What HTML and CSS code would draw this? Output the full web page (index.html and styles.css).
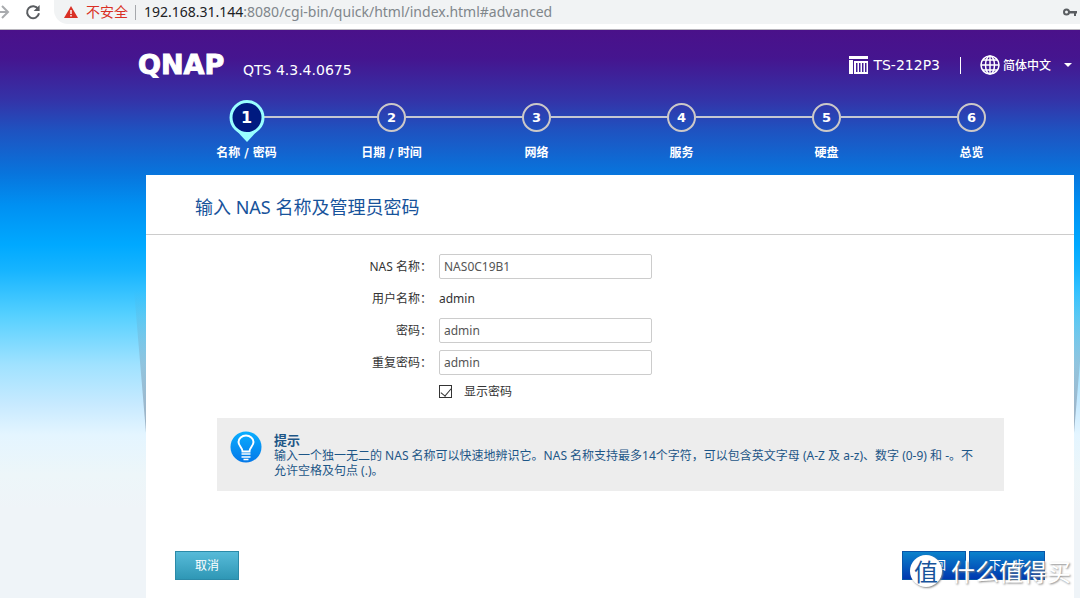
FILE: index.html
```html
<!DOCTYPE html>
<html lang="zh-CN">
<head>
<meta charset="utf-8">
<title>QNAP</title>
<meta name="viewport" content="width=device-width, initial-scale=1">
<link rel="stylesheet" href="styles.css">
</head>
<body>
<div class="browser-bar">
  <svg class="forward" width="10" height="16" viewBox="0 0 10 16" fill="none" stroke="#a9abae" stroke-width="2"><path d="M0 8h8M2 2l6 6-6 6"/></svg>
  <button class="reload" type="button" aria-label="Reload"><svg width="16" height="16" viewBox="0 0 16 16"><path d="M13.2 5A6 6 0 1 0 14 9.3" fill="none" stroke="#5a5d61" stroke-width="2"/><path d="M14.6 1v6H8.6z" fill="#5a5d61"/></svg></button>
  <div class="address">
    <svg width="14" height="12" viewBox="0 0 14 12"><path d="M7 0l7 12H0z" fill="#d93025"/><path d="M6.3 4h1.4v4H6.3zM6.3 9h1.4v1.4H6.3z" fill="#fff"/></svg>
    <span class="insecure">不安全</span>
    <span class="bar-rule"></span>
    <span class="url"><b>192.168.31.144</b>:8080/cgi-bin/quick/html/index.html#advanced</span>
    <svg class="key" width="14" height="10" viewBox="0 0 14 10"><circle cx="3.5" cy="5" r="2.5" fill="none" stroke="#5a5d61" stroke-width="2"/><path d="M6 4h8v2.4h-1V9h-2V6.4H6z" fill="#5a5d61"/></svg>
  </div>
</div>

<div class="page">
  <header class="top">
    <span class="logo">QNAP</span>
    <span class="version">QTS 4.3.4.0675</span>
    <span class="model">
      <svg width="19" height="18" viewBox="0 0 19 18" fill="#fff"><path d="M0 0h19v3H0zM0 4h4v14H0z"/><path d="M5 5h14v13H5zM7 7v9h1.500v-9zM10 7v9h1.500v-9zM13 7v9h1.500v-9zM16 7v9h1.500v-9z" fill-rule="evenodd"/></svg>
      TS-212P3
    </span>
    <span class="top-rule"></span>
    <button class="language" type="button">
      <svg width="20" height="20" viewBox="0 0 20 20" fill="none" stroke="#fff" stroke-width="1.500"><circle cx="10" cy="10" r="9"/><ellipse cx="10" cy="10" rx="4.500" ry="9"/><path d="M10 1v18M1 10h18M3 5h14M3 15h14"/></svg>
      <span>简体中文</span>
      <svg class="caret" width="8" height="4" viewBox="0 0 8 4" fill="#fff"><path d="M0 0h8L4 4z"/></svg>
    </button>
  </header>

  <ol class="steps">
    <li class="step current"><span class="dot"><svg width="36" height="44" viewBox="0 0 36 44"><path d="M4 27l14 15 14-15z" fill="#9ff"/><circle cx="18" cy="17.500" r="16" fill="#001a80" stroke="#9ff" stroke-width="3"/></svg><b>1</b></span><span class="step-name">名称 / 密码</span></li>
    <li class="step"><span class="dot"><b>2</b></span><span class="step-name">日期 / 时间</span></li>
    <li class="step"><span class="dot"><b>3</b></span><span class="step-name">网络</span></li>
    <li class="step"><span class="dot"><b>4</b></span><span class="step-name">服务</span></li>
    <li class="step"><span class="dot"><b>5</b></span><span class="step-name">硬盘</span></li>
    <li class="step"><span class="dot"><b>6</b></span><span class="step-name">总览</span></li>
  </ol>

  <main class="panel">
    <h1 class="title">输入 NAS 名称及管理员密码</h1>
    <form class="body">
      <div class="fields">
        <label for="nas">NAS 名称：</label>
        <input class="text" id="nas" type="text" value="NAS0C19B1">
        <span class="caption">用户名称：</span>
        <span class="value">admin</span>
        <label for="pw">密码：</label>
        <input class="text" id="pw" type="text" value="admin">
        <label for="pw2">重复密码：</label>
        <input class="text" id="pw2" type="text" value="admin">
        <label class="show"><input class="tick" type="checkbox" checked>显示密码</label>
      </div>
      <section class="tip">
        <svg width="32" height="32" viewBox="0 0 32 32">
          <defs><linearGradient id="bulb" x2="0" y2="1"><stop stop-color="#0aaeff"/><stop offset="1" stop-color="#0578e8"/></linearGradient></defs>
          <circle cx="16" cy="16" r="15.500" fill="url(#bulb)"/>
          <path d="M12.500 20.500c0-4-4-5.500-4-9.500a7.500 6.500 0 0 1 15 0c0 4-4 5.500-4 9.500z" fill="none" stroke="#fff" stroke-width="2"/>
          <path d="M11.500 23h9M11.500 26h9M13.500 28.500h5" stroke="#fff" stroke-width="1.600"/>
        </svg>
        <div class="tip-text">
          <h2>提示</h2>
          <p>输入一个独一无二的 NAS 名称可以快速地辨识它。NAS 名称支持最多14个字符，可以包含英文字母 (A-Z 及 a-z)、数字 (0-9) 和 -。不允许空格及句点 (.)。</p>
        </div>
      </section>
      <div class="actions">
        <button class="btn cancel" type="button">取消</button>
        <button class="btn" type="button">返回</button>
        <button class="btn next" type="submit">下一步</button>
      </div>
    </form>
  </main>
  <div class="watermark"><span class="seal">值</span><span>什么值得买</span></div>
</div>
</body>
</html>
```

FILE: styles.css
```css
* { box-sizing: border-box; }

body {
  margin: 0;
  min-height: 100vh;
  display: flex;
  flex-direction: column;
  font: 12px/15px "Noto Sans", "Noto Sans CJK SC", sans-serif;
  color: #333;
}

button { font: inherit; border: 0; cursor: pointer; }

.browser-bar {
  display: flex;
  align-items: center;
  height: 30px;
  padding-bottom: 5px;
  border-bottom: 1px solid #b8b5bd;
  background: #fff;
}
.reload { display: flex; margin-left: 15px; padding: 0; background: none; }
.address {
  flex: 1;
  display: flex;
  align-items: center;
  align-self: stretch;
  margin-left: 13px;
  padding: 0 3px 0 10px;
  border-radius: 0 0 0 14px;
  background: #f1f3f4;
  font-size: 14px;
  line-height: 20px;
  color: #80868b;
}
.insecure { margin-left: 8px; color: #d93025; }
.bar-rule { width: 1px; height: 15px; margin: 0 8px 0 7px; background: #a5a8ac; }
.url b { font-weight: 400; color: #202124; }
.key { margin-left: auto; }

.page {
  position: relative;
  flex: 1;
  display: flex;
  flex-direction: column;
  padding: 0 6px 0 146px;
  overflow: hidden;
  background: linear-gradient(#4a118a 0, #45158f 28px, #3433a8 70px, #1f52c0 100px, #0874dc 143px, #0090f2 175px, #00a9ff 215px, #16b4ff 240px, #55d0ff 285px, #a0e2ff 335px, #c8eaff 375px, #e4f5ff 405px, #edf6f9 445px, #eff4f8 480px);
}

.top {
  display: flex;
  align-items: center;
  height: 70px;
  margin-left: -8px;
  font: 14px/20px "DejaVu Sans", "Noto Sans CJK SC", sans-serif;
  color: #fff;
}
.logo {
  width: 105px;
  font-size: 27px;
  font-weight: 700;
  -webkit-text-stroke: 1px #fff;
}
.version { margin-top: 9px; }
.model { display: flex; align-items: center; gap: 5px; margin-left: auto; }
.top-rule { width: 1px; height: 17px; margin: 0 19px 0 20px; background: #fff; }
.language {
  display: flex;
  align-items: center;
  gap: 3px;
  padding: 0;
  margin-right: 2px;
  background: none;
  color: #fff;
  font: 500 12px/20px "Noto Sans CJK SC", sans-serif;
}
.caret { margin-left: 10px; }

.steps {
  display: grid;
  grid-template-columns: repeat(6, 1fr);
  height: 75px;
  margin: 0 30px 0 28px;
  padding: 0;
  list-style: none;
  color: #fff;
}
.step {
  position: relative;
  display: flex;
  flex-direction: column;
  align-items: center;
}
.dot {
  position: relative;
  display: grid;
  place-items: center;
  width: 29px;
  height: 29px;
  margin-top: 3px;
  border: 2px solid #ccc8c8;
  border-radius: 50%;
  font: 13px/20px "DejaVu Sans", sans-serif;
}
.step:not(:last-child)::after {
  content: "";
  position: absolute;
  left: calc(50% + 14px);
  top: 16px;
  width: calc(100% - 28px);
  height: 2px;
  background: #c4c7d2;
}
.dot b { position: relative; }
.current .dot { z-index: 1; border-color: transparent; font-size: 16px; }
.current .dot svg { position: absolute; left: -5px; top: -5px; }
.step-name {
  margin-top: 12px;
  font: 700 12px/18px "DejaVu Sans", "Noto Sans CJK SC", sans-serif;
}

.panel {
  position: relative;
  flex: 1;
  display: flex;
  flex-direction: column;
  background: #fff;
}
.panel::before, .panel::after {
  content: "";
  position: absolute;
  top: 115px;
  width: 12px;
  height: 143px;
  background: linear-gradient(rgba(110, 130, 150, 0), rgba(110, 130, 150, .6));
}
.panel::before { right: 100%; clip-path: polygon(0 0, 100% 0, 100% 100%); }
.panel::after { left: 100%; clip-path: polygon(0 0, 100% 0, 0 100%); }
.title {
  margin: 0;
  padding: 20px 49px 15px;
  border-bottom: 1px solid #ccc;
  font: 400 18px/24px "Noto Sans", "Noto Sans CJK SC", sans-serif;
  color: #17539b;
}
.body { flex: 1; display: flex; flex-direction: column; padding: 19px 29px 18px; }
.fields {
  display: grid;
  grid-template-columns: 257px 213px;
  grid-auto-rows: 25px;
  gap: 7px;
  align-items: center;
}
.fields > label, .caption { text-align: right; }
.text {
  height: 25px;
  padding: 0 4px;
  border: 1px solid #ccc;
  border-radius: 2px;
  font: inherit;
  color: #555;
}
.fields > .show { grid-column: 2; display: flex; align-items: center; gap: 12px; height: 19px; align-self: start; text-align: left; }
.tick {
  appearance: none;
  display: grid;
  place-items: center;
  width: 13px;
  height: 13px;
  margin: 0;
  border: 1px solid #333;
  background: #fff;
}
.tick:checked::after {
  content: "";
  width: 5px;
  height: 9px;
  margin-bottom: 2px;
  border: solid #333;
  border-width: 0 1px 1px 0;
  transform: rotate(40deg);
}
.tip {
  display: flex;
  gap: 12px;
  margin: 11px 41px 0 42px;
  padding: 13px 20px 13px 13px;
  background: #ededed;
  color: #1d5687;
}
.tip svg { flex: none; }
.tip h2 { margin: 0; padding-top: 1px; font-size: 13px; line-height: 16px; }
.tip p { margin: 0; }
.actions { display: flex; gap: 3px; margin-top: auto; }
.btn {
  min-width: 64px;
  height: 29px;
  padding: 0 18px;
  border: 1px solid #0755a8;
  background: linear-gradient(#0a82cc, #0038b0);
  color: #fff;
}
.next { min-width: 76px; }
.cancel { margin-right: auto; border-color: #2b8aa8; background: linear-gradient(#57bbd9, #2f97b5); }

.watermark {
  position: absolute;
  right: 9px;
  bottom: 10px;
  display: flex;
  align-items: center;
  gap: 9px;
  font: 400 24px/34px "Noto Sans CJK SC", sans-serif;
  color: #fff;
  text-shadow: 1px 1px 2px #888;
}
.seal {
  width: 32px;
  height: 32px;
  border-radius: 50%;
  background: #fff;
  box-shadow: 1px 1px 2px #888;
  color: #17539b;
  line-height: 31px;
  text-align: center;
  text-shadow: none;
}
```
